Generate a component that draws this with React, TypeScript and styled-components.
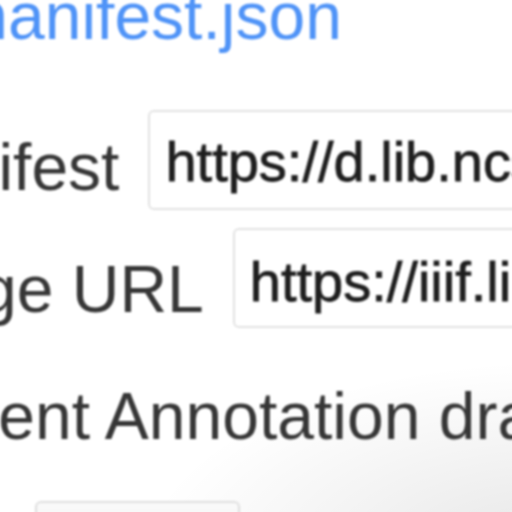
import React from "react";
import styled, { createGlobalStyle } from "styled-components";

const Global = createGlobalStyle`
  html, body { margin: 0; padding: 0; background: #ffffff; }
  body { font-family: "Liberation Sans", Arial, Helvetica, sans-serif; }
`;

const Page = styled.div`
  width: 512px;
  height: 512px;
  overflow: hidden;
  position: relative;
  background:
    radial-gradient(ellipse 420px 200px at 560px 560px, rgba(0,0,0,0.10), rgba(0,0,0,0) 100%),
    #ffffff;
`;

const Content = styled.div`
  margin-left: -130px;
  display: flex;
  flex-direction: column;
  font-size: 66px;
  line-height: 76px;
  color: #363636;
  filter: blur(1.3px);
`;

const Heading = styled.div`
  margin-top: -22px;
  padding-left: 83px;
  white-space: nowrap;
`;

const Link = styled.a`
  color: #4f93f7;
  text-decoration: none;
`;

const Row = styled.div<{ $top: number }>`
  display: flex;
  align-items: flex-start;
  gap: 29px;
  margin-top: ${(p) => p.$top}px;
  white-space: nowrap;
`;

const Label = styled.label<{ $offset: number }>`
  margin-top: ${(p) => p.$offset}px;
  flex: none;
`;

const Field = styled.div`
  box-sizing: border-box;
  height: 100px;
  width: 700px;
  flex: none;
  border: 2px solid #e2e2e2;
  border-radius: 6px;
  background: #ffffff;
  padding: 0 0 0 15px;
  display: flex;
  align-items: center;
  font-size: 56px;
  line-height: 62px;
  color: #1e1e1e;
  -webkit-text-stroke: 0.8px #1e1e1e;
  overflow: hidden;
`;

const FieldText = styled.span<{ $shift: number }>`
  margin-top: ${(p) => p.$shift}px;
`;

const Status = styled.div`
  margin-top: 50px;
  white-space: nowrap;
`;

const Button = styled.div`
  margin-top: 47px;
  margin-left: 165px;
  width: 205px;
  height: 60px;
  box-sizing: border-box;
  border: 2px solid #dedede;
  border-radius: 6px;
  background: linear-gradient(#fafafa, #ececec);
`;

export default function App() {
  return (
    <>
      <Global />
      <Page>
        <Content>
          <Heading>
            <Link href="#">manifest.json</Link>
          </Heading>
          <Row $top={56}>
            <Label $offset={19}>Manifest</Label>
            <Field>
              <FieldText $shift={4}>https://d.lib.ncsu.edu/collections/catalog/manifest.json</FieldText>
            </Field>
          </Row>
          <Row $top={18}>
            <Label $offset={23}>Image URL</Label>
            <Field>
              <FieldText $shift={8}>https://iiif.lib.ncsu.edu/iiif/full/full/0/default.jpg</FieldText>
            </Field>
          </Row>
          <Status>Current Annotation draft</Status>
          <Button />
        </Content>
      </Page>
    </>
  );
}
